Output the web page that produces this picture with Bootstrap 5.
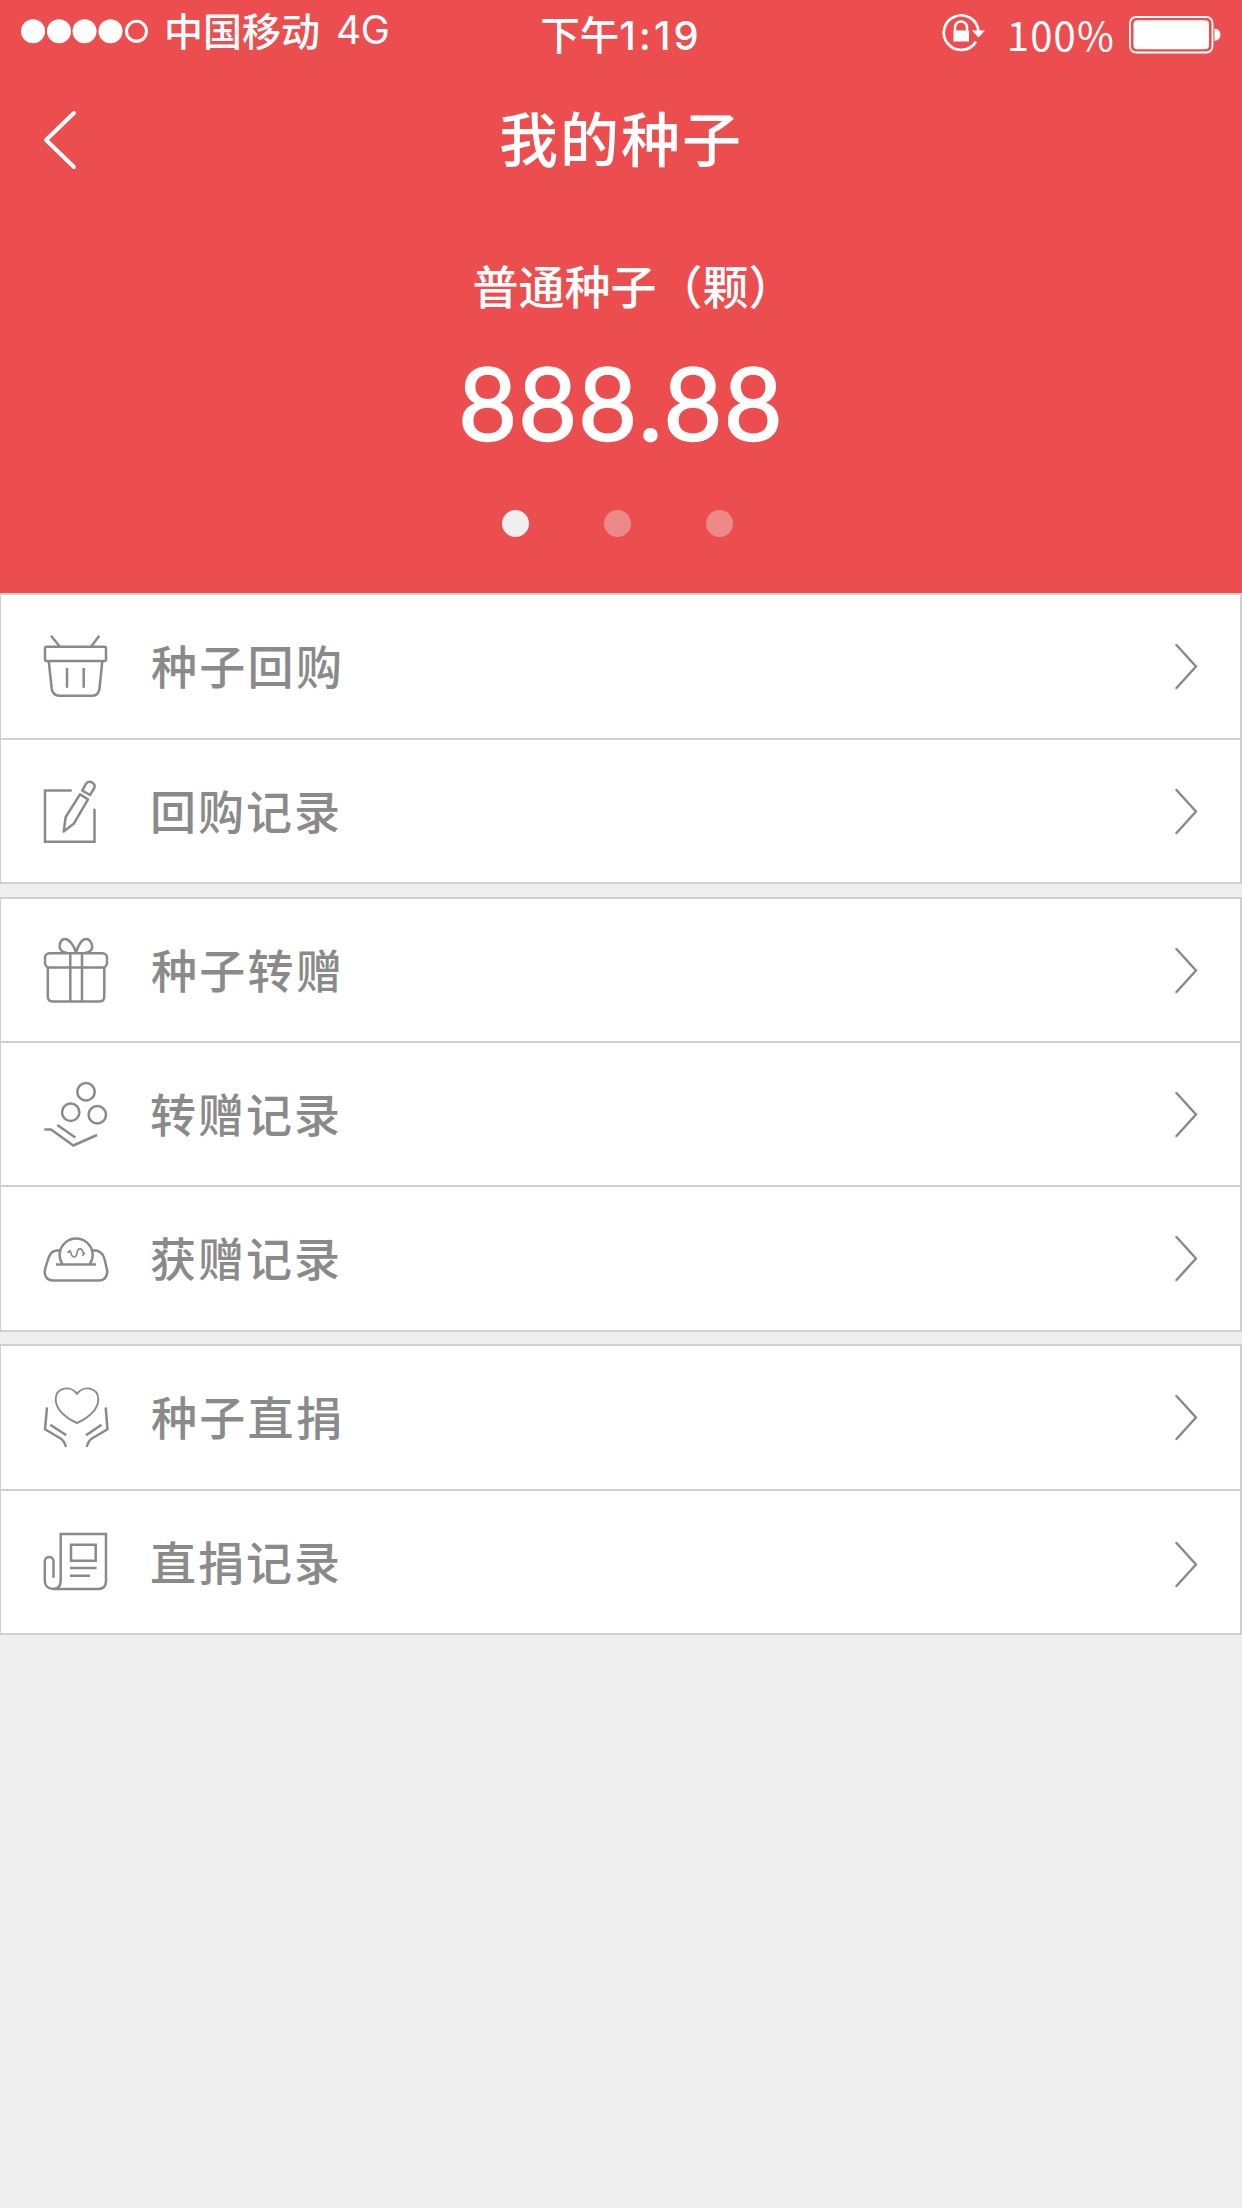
<!DOCTYPE html>
<html lang="zh-CN">
<head>
<meta charset="utf-8">
<meta name="viewport" content="width=device-width, initial-scale=1">
<title>我的种子</title>
<link href="https://cdn.jsdelivr.net/npm/bootstrap@5.3.0/dist/css/bootstrap.min.css" rel="stylesheet">
<style>
  body { background: #eee; font-family: "Noto Sans CJK SC", sans-serif; font-weight: 500; overflow-x: hidden; }
  svg { display: block; flex: none; fill: none; stroke: currentColor; stroke-linejoin: round; }
  .hero { background: #ec4e4f; height: 593px; }
  .status { height: 70px; line-height: 1; }
  .status > div { flex: 1 1 0; }
  .carrier { font-size: 39px; padding: 10px 0 0 12px; }
  .net { font-family: Inter, sans-serif; font-weight: 400; font-size: 39px; letter-spacing: -.5px; padding: 10px 0 0 16px; }
  .clock { font-size: 39.5px; padding-top: 13px; white-space: nowrap; }
  .clock span { font-family: Inter, sans-serif; font-weight: 500; font-size: 40px; letter-spacing: 3px; }
  .power { font-family: "Noto Sans CJK SC", sans-serif; font-weight: 400; font-size: 40px; letter-spacing: 1.2px; padding: 14px 13px 0 24px; }
  .titlebar { height: 140px; padding: 0 42px; }
  .titlebar h1 { font-size: 59px; line-height: 1; letter-spacing: 2px; font-weight: 500; padding-bottom: 7px; }
  .kind { font-size: 46px; line-height: 60px; margin-top: 44px; padding-left: 25px; }
  .amount { font-family: Lato, sans-serif; font-weight: 400; font-size: 101.5px; line-height: 110px; letter-spacing: 1.2px; margin-top: 33px; -webkit-text-stroke: 1.6px #fff; }
  .dots { gap: 75px; margin-top: 53px; padding-right: 7px; }
  .dots i { width: 27px; height: 27px; border-radius: 50%; background: #ee898a; }
  .dots .on { background: #efefef; }
  .menu { --bs-list-group-border-color: #d0d0d0; --bs-list-group-border-radius: 0; border: solid #d0d0d0; border-width: 2px 2px 2px 1px; margin-bottom: 13px; }
  .menu + .menu { margin-bottom: 12px; }
  .menu .list-group-item { border: 0; border-bottom: 2px solid #d0d0d0; height: 144px; padding: 35px 42px 0 39px; color: #8a8a8a; background: #fff; }
  .menu .list-group-item.tall { height: 145px; }
  .menu .list-group-item:last-child { border-bottom: 0; height: 142px; }
  .menu .list-group-item.tall:last-child { height: 143px; }
  .menu svg { stroke-width: 2.5; }
  .label { font-size: 46px; letter-spacing: 2.3px; line-height: 68px; margin-left: 39px; flex: 1; }
  .label.record { margin-left: 38px; letter-spacing: 2px; }
</style>
<script src="https://cdn.jsdelivr.net/npm/bootstrap@5.3.0/dist/js/bootstrap.bundle.min.js"></script>
</head>
<body>
<svg width="0" height="0" class="position-absolute"><symbol id="next" viewBox="0 0 24 72"><path d="M2.5 15 22 36.500 2.500 58" stroke-linecap="round"/></symbol></svg>
<header class="hero text-white">
  <div class="status d-flex">
    <div class="d-flex">
      <svg width="152" height="62" viewBox="0 0 152 62"><g fill="#fff" stroke="none"><circle cx="33" cy="31.3" r="12"/><circle cx="59" cy="31.3" r="12"/><circle cx="84.5" cy="31.3" r="12"/><circle cx="110.5" cy="31.3" r="12"/></g><circle cx="136.500" cy="31.3" r="10" stroke-width="3"/></svg>
      <span class="carrier">中国移动</span><span class="net">4G</span>
    </div>
    <div class="clock text-center">下午<span>1:19</span></div>
    <div class="d-flex justify-content-end">
      <svg width="42" height="66" viewBox="941 0 42 66" overflow="visible"><path d="M976 41.500A17.3 17.3 0 1 1 978.4 31.500" stroke-width="2.7"/><path d="m972 30.500 13 0-6.5 7z" fill="#fff" stroke="none"/><path d="M955 31v-3.500a6 6 0 0 1 12 0V31" stroke-width="2.5"/><path d="M953.500 30.500h15.500v11h-15.500z" fill="#fff" stroke="none"/></svg>
      <span class="power">100%</span>
      <svg width="114" height="66" viewBox="1128 0 114 66"><rect x="1130" y="17" width="82.500" height="35.500" rx="6" stroke-width="1.800"/><rect x="1133.500" y="20.300" width="75.500" height="29" rx="4" fill="#fff" stroke="none"/><path d="M1214.500 28.500q6 1 6 6.300t-6 6.300z" fill="#fff" stroke="none"/></svg>
    </div>
  </div>
  <div class="titlebar d-flex align-items-center justify-content-between">
    <svg width="36" height="64" viewBox="42 108 36 64"><path d="M74 113 46 140 74 167" stroke-width="4" stroke-linecap="round"/></svg>
    <h1 class="mb-0">我的种子</h1>
    <span style="width:36px"></span>
  </div>
  <div class="kind text-center">普通种子（颗）</div>
  <div class="amount text-center">888.88</div>
  <div class="dots d-flex justify-content-center"><i class="on"></i><i></i><i></i></div>
</header>
<main>
  <div class="menu list-group">
    <a class="list-group-item d-flex align-items-start tall"><svg width="72" height="72"><rect x="5" y="16.700" width="61" height="14.300" rx="1.500"/><path d="M11 5.700 20 16.700M59.300 5.700 51 16.700M8.700 31l3 27.500q1 7.200 7.800 7.200h33q6 0 7-7.200L62.300 31M27 38v19.700M43.700 38v19.700"/></svg><span class="label">种子回购</span><svg width="24" height="72"><use href="#next"/></svg></a>
    <a class="list-group-item d-flex align-items-start"><svg width="72" height="72" viewBox="0 -.7 72 72"><g stroke-linejoin="miter"><path d="M31.700 14.700H5V66h49.500V33"/></g><path d="m40 18.700 8 5-14 24-10.300 8 2-14.400zM42.300 15l7.700 4.300 4-6.500c2.500-5-4.500-9-8-4.800z"/></svg><span class="label record">回购记录</span><svg width="24" height="72"><use href="#next"/></svg></a>
  </div>
  <div class="menu list-group">
    <a class="list-group-item d-flex align-items-start"><svg width="72" height="72"><rect x="5" y="19.300" width="62" height="14.200" rx="4.500"/><path d="M7.800 33.500v29q0 5 5 5h46.500q5 0 5-5v-29M30.300 19.300v48M42 19.300v48M36 18.700C34 11 29 5 25 5c-5 0-7 8-3.700 11.500q1.700 2 6 2.500M36 18.700C38 11 42 5 46 5c5 0 8 8 4.700 11.500q-1.700 2-6 2.500"/></svg><span class="label">种子转赠</span><svg width="24" height="72"><use href="#next"/></svg></a>
    <a class="list-group-item d-flex align-items-start"><svg width="72" height="72"><circle cx="46" cy="13.700" r="8.700"/><circle cx="30.700" cy="34.300" r="8.700"/><circle cx="57.300" cy="36.700" r="8.700"/><path d="M4.300 51.500H11L33.300 67.500 57 57M17.300 47l18 12.500"/></svg><span class="label record">转赠记录</span><svg width="24" height="72"><use href="#next"/></svg></a>
    <a class="list-group-item d-flex align-items-start tall"><svg width="72" height="72"><path d="M22.300 42A16.500 16.500 0 1 1 50 42M16 42.500h40M19.300 28.300C12 28.300 10 32 8.500 36L5.200 46.500C3.500 54 7 58.500 13 58.500h46c6 0 9-5 8-11L64.500 37c-1.200-5-4-8.700-11.500-8.700"/><path d="M30.500 28 28 30.300h3C31.500 36.500 36.500 36 37 31c.5-5.500 5.500-5.500 6 0h1.500L42.300 34" stroke-width="1.600"/></svg><span class="label record">获赠记录</span><svg width="24" height="72"><use href="#next"/></svg></a>
  </div>
  <div class="menu list-group">
    <a class="list-group-item d-flex align-items-start tall"><svg width="72" height="72"><path d="M37 13C31 4 16 6 15.700 18.500 15.700 29 27 38 37 42 47 38 58.300 29 58.300 18.500 58 6 43 4 37 13z" stroke-width="1.900"/><path d="M7 26.300 5 48.300l16 9.500q3 2 5 8M10.300 43.700l16 10.600M65.700 26.300l1.800 22-16 9.500q-3 2-4.800 8M61.500 43.700l-15.500 10.600"/></svg><span class="label">种子直捐</span><svg width="24" height="72"><use href="#next"/></svg></a>
    <a class="list-group-item d-flex align-items-start"><svg width="72" height="72"><g stroke-linejoin="miter"><path d="M12.700 63H58q8 0 8-8V8H20.700v46.500q0 8.500-8 8.500c-5 0-7.900-4-7.900-8V35.500c0-6 8.700-6 8.700 0v16.300M31 18.700h24.700v16H31zM30 42h26.500M30 49.700h20"/></g></svg><span class="label record">直捐记录</span><svg width="24" height="72" class="mt-1" viewBox="0 2 24 72"><use href="#next" width="24" height="72"/></svg></a>
  </div>
</main>
</body>
</html>
